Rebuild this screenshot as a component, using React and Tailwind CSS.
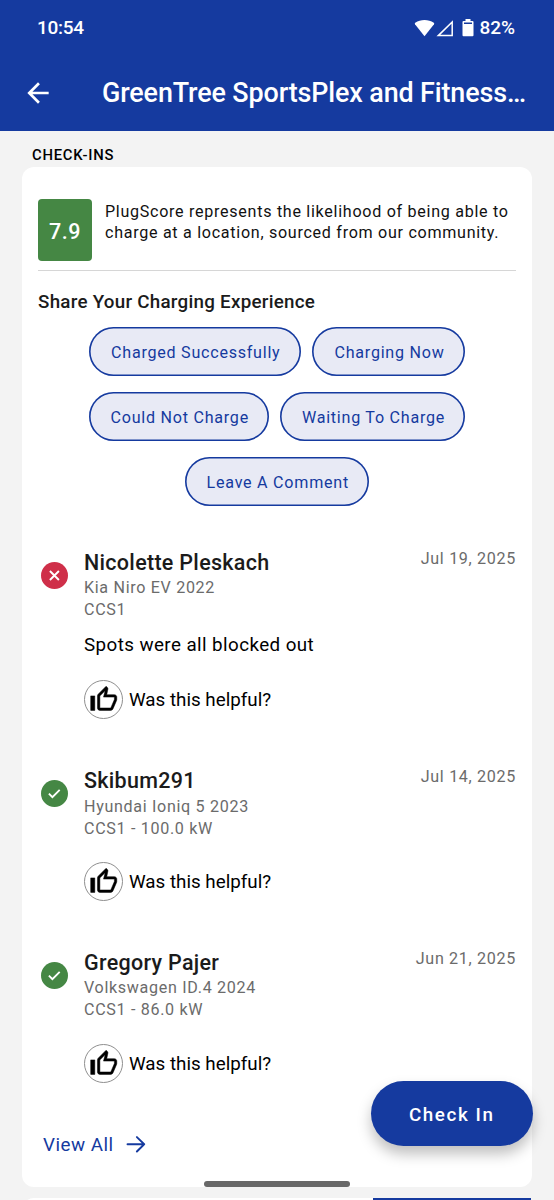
import React from 'react';

const shareOptions = [
  [
    { label: 'Charged Successfully', width: 'w-[212.5px]' },
    { label: 'Charging Now', width: 'w-[153px]' },
  ],
  [
    { label: 'Could Not Charge', width: 'w-[180.5px]' },
    { label: 'Waiting To Charge', width: 'w-[185px]' },
  ],
  [{ label: 'Leave A Comment', width: 'w-[184.5px]' }],
];

const checkIns = [
  {
    name: 'Nicolette Pleskach',
    vehicle: 'Kia Niro EV 2022',
    plug: 'CCS1',
    date: 'Jul 19, 2025',
    comment: 'Spots were all blocked out',
    success: false,
  },
  {
    name: 'Skibum291',
    vehicle: 'Hyundai Ioniq 5 2023',
    plug: 'CCS1 - 100.0 kW',
    date: 'Jul 14, 2025',
    success: true,
  },
  {
    name: 'Gregory Pajer',
    vehicle: 'Volkswagen ID.4 2024',
    plug: 'CCS1 - 86.0 kW',
    date: 'Jun 21, 2025',
    success: true,
  },
];

const StatusBar = () => (
  <div className="flex h-[56px] items-center justify-between pl-[37px] pr-[39px] text-[19px] font-medium leading-none">
    <span className="mt-[-1px] tracking-[-0.3px]">10:54</span>
    <div className="flex items-center">
      <svg className="h-[18px] w-[21px]" viewBox="0 0 21 18" fill="currentColor">
        <path d="M10.5 17.3 1 5.2a1 1 0 0 1 .2-1.4C4 1.9 7.1 1 10.5 1s6.5.9 9.3 2.8a1 1 0 0 1 .2 1.4z" />
      </svg>
      <svg className="ml-[1px] h-[18px] w-[18px]" viewBox="0 0 18 18" fill="none" stroke="currentColor" strokeWidth="1.5">
        <path d="M2.3 16.6H16.2V3z" />
      </svg>
      <svg className="ml-[8px] mt-[-2px] h-[19px] w-[12px]" viewBox="0 0 12 19" fill="currentColor">
        <path d="M3.5 1h5v2H10.5a1 1 0 0 1 1 1v13.2a1 1 0 0 1-1 1h-9a1 1 0 0 1-1-1V4a1 1 0 0 1 1-1H3.5zM2 4.4v1.5h8V4.4z" fillRule="evenodd" />
      </svg>
      <span className="ml-[5px] mt-[-1px]">82%</span>
    </div>
  </div>
);

const Header = () => (
  <header className="h-[131px] shrink-0 bg-[#153a9f] text-white">
    <StatusBar />
    <div className="flex h-[74px] items-center pl-[22px]">
      <svg className="h-8 w-8" viewBox="0 0 24 24" fill="currentColor">
        <path d="M20 11H7.83l5.59-5.59L12 4l-8 8 8 8 1.41-1.41L7.83 13H20v-2z" />
      </svg>
      <h1 className="ml-[48px] whitespace-nowrap text-[26.9px] font-medium leading-none tracking-[-0.12px]">
        GreenTree SportsPlex and Fitness…
      </h1>
    </div>
  </header>
);

const StatusIcon = ({ success }) => (
  <svg
    className={success ? 'h-[27px] w-[27px] text-[#458744]' : 'h-[27px] w-[27px] text-[#cf2f49]'}
    viewBox="0 0 27 27"
    fill="none"
  >
    <circle cx="13.5" cy="13.5" r="13.5" fill="currentColor" />
    {success ? (
      <path d="m7.9 13.6 3.5 3.5 7.3-7.3" stroke="white" strokeWidth="1.9" />
    ) : (
      <path d="m8.9 9 9 9m0-9-9 9" stroke="white" strokeWidth="1.9" />
    )}
  </svg>
);

const Helpful = () => (
  <div className="mt-[22.4px] flex items-center">
    <div className="flex h-[39px] w-[39px] items-center justify-center rounded-full border border-[#8f8f8f]">
      <svg className="h-[29px] w-[29px]" viewBox="0 0 24 24" fill="black" stroke="black" strokeWidth="0.4">
        <path d="M9 21h9c.83 0 1.54-.5 1.84-1.22l3.02-7.05c.09-.23.14-.47.14-.73v-2c0-1.1-.9-2-2-2h-6.31l.95-4.57.03-.32c0-.41-.17-.79-.44-1.06L14.17 1 7.58 7.59C7.22 7.95 7 8.45 7 9v10c0 1.1.9 2 2 2zM9 9l4.34-4.34L12 10h9v2l-3 7H9V9zM1.4 9h3.4v12H1.4z" />
      </svg>
    </div>
    <span className="ml-[6px] pt-[2px] text-[18.8px] leading-[25px] text-black">Was this helpful?</span>
  </div>
);

const CheckIn = ({ checkIn }) => (
  <li className="flex items-start">
    <div className="mt-[14.2px] w-[46px] shrink-0 pl-[2.5px]">
      <StatusIcon success={checkIn.success} />
    </div>
    <div className="grow">
      <div className="pt-[1.7px] text-[21.5px] font-medium leading-[26px] tracking-[0.3px]">{checkIn.name}</div>
      <div className="mt-[1.6px] text-[16.1px] leading-[22px] tracking-[0.68px] text-[#6b6b6b]">
        <div>{checkIn.vehicle}</div>
        <div>{checkIn.plug}</div>
      </div>
      {checkIn.comment && (
        <p className="mt-[11.5px] text-[18.8px] leading-[25px] tracking-[0.42px] text-black">{checkIn.comment}</p>
      )}
      <Helpful />
    </div>
    <div className="text-[16.1px] leading-[22px] tracking-[0.68px] text-[#6b6b6b]">{checkIn.date}</div>
  </li>
);

const App = () => {
  return (
    <div className="relative flex h-[1200px] w-[554px] flex-col overflow-hidden bg-[#f3f3f3] font-['Roboto',sans-serif] text-[#1b1b1b]">
      <Header />
      <h2 className="mt-[14px] pl-[32px] text-[14.8px] font-medium leading-[21px] tracking-[0.75px] text-black">
        CHECK-INS
      </h2>

      <section className="mx-[22px] mt-[1px] h-[1019.5px] shrink-0 rounded-xl bg-white px-4 pt-8">
        <div className="flex border-b border-[#d6d6d6] pb-[9px]">
          <div className="flex h-[62px] w-[54px] items-center justify-center rounded bg-[#458744] pt-[4px] text-[21.5px] font-medium tracking-[0.6px] text-white">
            7.9
          </div>
          <p className="ml-[13px] mt-[1.5px] whitespace-nowrap text-[16.1px] leading-[21.5px] tracking-[0.71px] text-[#111]">
            PlugScore represents the likelihood of being able to
            <br />
            charge at a location, sourced from our community.
          </p>
        </div>

        <h3 className="mt-[19px] text-[18.8px] font-medium leading-[25px] tracking-[0.26px]">
          Share Your Charging Experience
        </h3>
        <div className="mt-[12.4px] flex flex-col gap-[15.6px]">
          {shareOptions.map((row) => (
            <div key={row[0].label} className="flex justify-center gap-[11px]">
              {row.map((option) => (
                <button
                  key={option.label}
                  className={`${option.width} h-[49px] whitespace-nowrap rounded-full bg-[#e8eaf5] pl-[1.5px] pt-[3px] text-[16.1px] tracking-[0.75px] text-[#153a9f] shadow-[inset_0_0_0_1.6px_#153a9f]`}
                >
                  {option.label}
                </button>
              ))}
            </div>
          ))}
        </div>

        <ul className="mt-[42.4px] flex flex-col gap-[47.1px]">
          {checkIns.map((checkIn) => (
            <CheckIn key={checkIn.name} checkIn={checkIn} />
          ))}
        </ul>

        <a className="mt-[50px] flex items-center pl-[5px] text-[18.8px] leading-[25px] tracking-[0.5px] text-[#153a9f]">
          View All
          <svg className="ml-[12.5px] h-[18px] w-[20px]" viewBox="0 0 20 18" fill="none" stroke="currentColor" strokeWidth="1.9" strokeLinecap="round" strokeLinejoin="round">
            <path d="M1.5 8.3h16.7M10.9 1.1 18.2 8.3l-7.3 7.2" />
          </svg>
        </a>
      </section>

      {/* top edge of the next card */}
      <section className="mx-[22px] mt-[11px] flex h-10 shrink-0 justify-end rounded-t-xl bg-white pr-px">
        <div className="h-full w-[158.5px] bg-[#153a9f]" />
      </section>

      <button className="absolute left-[371px] top-[1081px] h-[65px] w-[161.5px] rounded-full bg-[#153a9f] pt-[3px] text-[18.8px] font-medium tracking-[1.6px] text-white shadow-[0_8px_14px_rgba(0,0,0,0.25)]">
        Check In
      </button>
      <div className="absolute left-[204px] top-[1181px] h-[5.5px] w-[146px] rounded-full bg-[#686868]" />
    </div>
  );
};

export default App;
